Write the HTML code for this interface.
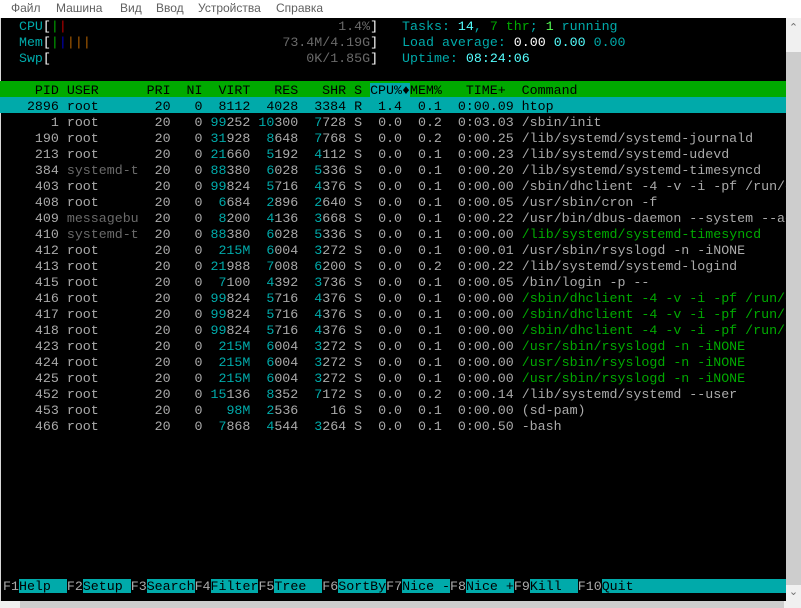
<!DOCTYPE html>
<html><head><meta charset="utf-8"><style>
*{margin:0;padding:0}
body{width:801px;height:608px;background:#fff;position:relative;overflow:hidden}
.menu{position:absolute;top:1px;font:12px "Liberation Sans","DejaVu Sans",sans-serif;color:#606060}
#term{position:absolute;left:0;top:18px;width:786px;height:583px;background:#000;border-left:1px solid #d8d8d8;box-sizing:border-box}
.l{position:absolute;left:3px;width:783px;height:16px;line-height:19px;font:13.3px/19px "Liberation Mono","DejaVu Sans Mono",monospace;color:#aaa;white-space:pre;overflow:hidden}
b{font-weight:normal;color:#00aaaa}
.c{color:#00aaaa}.bc{color:#55ffff}.w{color:#fff}.g{color:#00aa00}.bg{color:#55ff55}
.d{color:#6a6a6a}.r{color:#c00000}.bl{color:#0000c0}.o{color:#b06000}
.gr{color:#00aa00}
.hdr{background:#00aa00;color:#000;left:0;padding-left:3px;width:783px}
.hc{background:#00aaaa}
.sel{background:#00aaaa;color:#000;left:0;padding-left:3px;width:783px}
.sel b{color:#000}
.fk{left:0;padding-left:3px;width:783px}
.k{background:#00aaaa;color:#000}
.vs{position:absolute;left:786px;width:15px}
</style></head><body>
<span class="menu" style="left:11px">Файл</span>
<span class="menu" style="left:56px">Машина</span>
<span class="menu" style="left:120px">Вид</span>
<span class="menu" style="left:156px">Ввод</span>
<span class="menu" style="left:198px">Устройства</span>
<span class="menu" style="left:276px">Справка</span>
<div id="term"></div>
<div class="vs" style="top:18px;height:34px;background:#f0f0f0;font:11px 'DejaVu Sans',sans-serif;color:#707070;text-align:center;line-height:20px">&#8963;</div>
<div class="vs" style="top:52px;height:533px;background:#cdcdcd"></div>
<div class="vs" style="top:585px;height:16px;background:#f0f0f0;font:11px 'DejaVu Sans',sans-serif;color:#707070;text-align:center;line-height:14px">&#8964;</div>
<div style="position:absolute;left:0;top:601px;width:801px;height:7px;background:#f0f0f0"></div>
<div style="position:absolute;left:20px;top:601px;width:764px;height:7px;background:#cdcdcd"></div>

<div class="l" style="top:17px">  <span class="c">CPU</span><span class="w">[</span><span class="g">|</span><span class="r">|</span>                                  <span class="d">1.4%</span><span class="w">]</span>   <span class="c">Tasks: </span><span class="bc">14</span><span class="c">, </span><span class="g">7</span><span class="g"> thr</span><span class="c">; </span><span class="bg">1</span><span class="c"> running</span></div>
<div class="l" style="top:33px">  <span class="c">Mem</span><span class="w">[</span><span class="g">|</span><span class="bl">|</span><span class="o">|||</span>                        <span class="d">73.4M/4.19G</span><span class="w">]</span>   <span class="c">Load average: </span><span class="w">0.00 </span><span class="bc">0.00 </span><span class="c">0.00</span></div>
<div class="l" style="top:49px">  <span class="c">Swp</span><span class="w">[</span>                                <span class="d">0K/1.85G</span><span class="w">]</span>   <span class="c">Uptime: </span><span class="bc">08:24:06</span></div>

<div class="l hdr" style="top:81px">    PID USER      PRI  NI  VIRT   RES   SHR S <span class="hc">CPU%&#9830;</span>MEM%   TIME+  Command</div>
<div class="l sel" style="top:97px">   2896 root       20   0  8112  4028  3384 R  1.4  0.1  0:00.09 htop</div>
<div class="l" style="top:113px">      1 root       20   0 <b>99</b>252 <b>10</b>300  <b>7</b>728 S  0.0  0.2  0:03.03 /sbin/init</div>
<div class="l" style="top:129px">    190 root       20   0 <b>31</b>928  <b>8</b>648  <b>7</b>768 S  0.0  0.2  0:00.25 /lib/systemd/systemd-journald</div>
<div class="l" style="top:145px">    213 root       20   0 <b>21</b>660  <b>5</b>192  <b>4</b>112 S  0.0  0.1  0:00.23 /lib/systemd/systemd-udevd</div>
<div class="l" style="top:161px">    384 <span class="d">systemd-t</span>  20   0 <b>88</b>380  <b>6</b>028  <b>5</b>336 S  0.0  0.1  0:00.20 /lib/systemd/systemd-timesyncd</div>
<div class="l" style="top:177px">    403 root       20   0 <b>99</b>824  <b>5</b>716  <b>4</b>376 S  0.0  0.1  0:00.00 /sbin/dhclient -4 -v -i -pf /run/dhclient.enp0s3.pid</div>
<div class="l" style="top:193px">    408 root       20   0  <b>6</b>684  <b>2</b>896  <b>2</b>640 S  0.0  0.1  0:00.05 /usr/sbin/cron -f</div>
<div class="l" style="top:209px">    409 <span class="d">messagebu</span>  20   0  <b>8</b>200  <b>4</b>136  <b>3</b>668 S  0.0  0.1  0:00.22 /usr/bin/dbus-daemon --system --address</div>
<div class="l" style="top:225px">    410 <span class="d">systemd-t</span>  20   0 <b>88</b>380  <b>6</b>028  <b>5</b>336 S  0.0  0.1  0:00.00 <span class="gr">/lib/systemd/systemd-timesyncd</span></div>
<div class="l" style="top:241px">    412 root       20   0  <b>215M</b>  <b>6</b>004  <b>3</b>272 S  0.0  0.1  0:00.01 /usr/sbin/rsyslogd -n -iNONE</div>
<div class="l" style="top:257px">    413 root       20   0 <b>21</b>988  <b>7</b>008  <b>6</b>200 S  0.0  0.2  0:00.22 /lib/systemd/systemd-logind</div>
<div class="l" style="top:273px">    415 root       20   0  <b>7</b>100  <b>4</b>392  <b>3</b>736 S  0.0  0.1  0:00.05 /bin/login -p --</div>
<div class="l" style="top:289px">    416 root       20   0 <b>99</b>824  <b>5</b>716  <b>4</b>376 S  0.0  0.1  0:00.00 <span class="gr">/sbin/dhclient -4 -v -i -pf /run/dhclient.enp0s3.pid</span></div>
<div class="l" style="top:305px">    417 root       20   0 <b>99</b>824  <b>5</b>716  <b>4</b>376 S  0.0  0.1  0:00.00 <span class="gr">/sbin/dhclient -4 -v -i -pf /run/dhclient.enp0s3.pid</span></div>
<div class="l" style="top:321px">    418 root       20   0 <b>99</b>824  <b>5</b>716  <b>4</b>376 S  0.0  0.1  0:00.00 <span class="gr">/sbin/dhclient -4 -v -i -pf /run/dhclient.enp0s3.pid</span></div>
<div class="l" style="top:337px">    423 root       20   0  <b>215M</b>  <b>6</b>004  <b>3</b>272 S  0.0  0.1  0:00.00 <span class="gr">/usr/sbin/rsyslogd -n -iNONE</span></div>
<div class="l" style="top:353px">    424 root       20   0  <b>215M</b>  <b>6</b>004  <b>3</b>272 S  0.0  0.1  0:00.00 <span class="gr">/usr/sbin/rsyslogd -n -iNONE</span></div>
<div class="l" style="top:369px">    425 root       20   0  <b>215M</b>  <b>6</b>004  <b>3</b>272 S  0.0  0.1  0:00.00 <span class="gr">/usr/sbin/rsyslogd -n -iNONE</span></div>
<div class="l" style="top:385px">    452 root       20   0 <b>15</b>136  <b>8</b>352  <b>7</b>172 S  0.0  0.2  0:00.14 /lib/systemd/systemd --user</div>
<div class="l" style="top:401px">    453 root       20   0   <b>98M</b>  <b>2</b>536    16 S  0.0  0.1  0:00.00 (sd-pam)</div>
<div class="l" style="top:417px">    466 root       20   0  <b>7</b>868  <b>4</b>544  <b>3</b>264 S  0.0  0.1  0:00.50 -bash</div>

<div class="l fk" style="top:577px">F1<span class="k">Help  </span>F2<span class="k">Setup </span>F3<span class="k">Search</span>F4<span class="k">Filter</span>F5<span class="k">Tree  </span>F6<span class="k">SortBy</span>F7<span class="k">Nice -</span>F8<span class="k">Nice +</span>F9<span class="k">Kill  </span>F10<span class="k">Quit                          </span></div>
</body></html>
